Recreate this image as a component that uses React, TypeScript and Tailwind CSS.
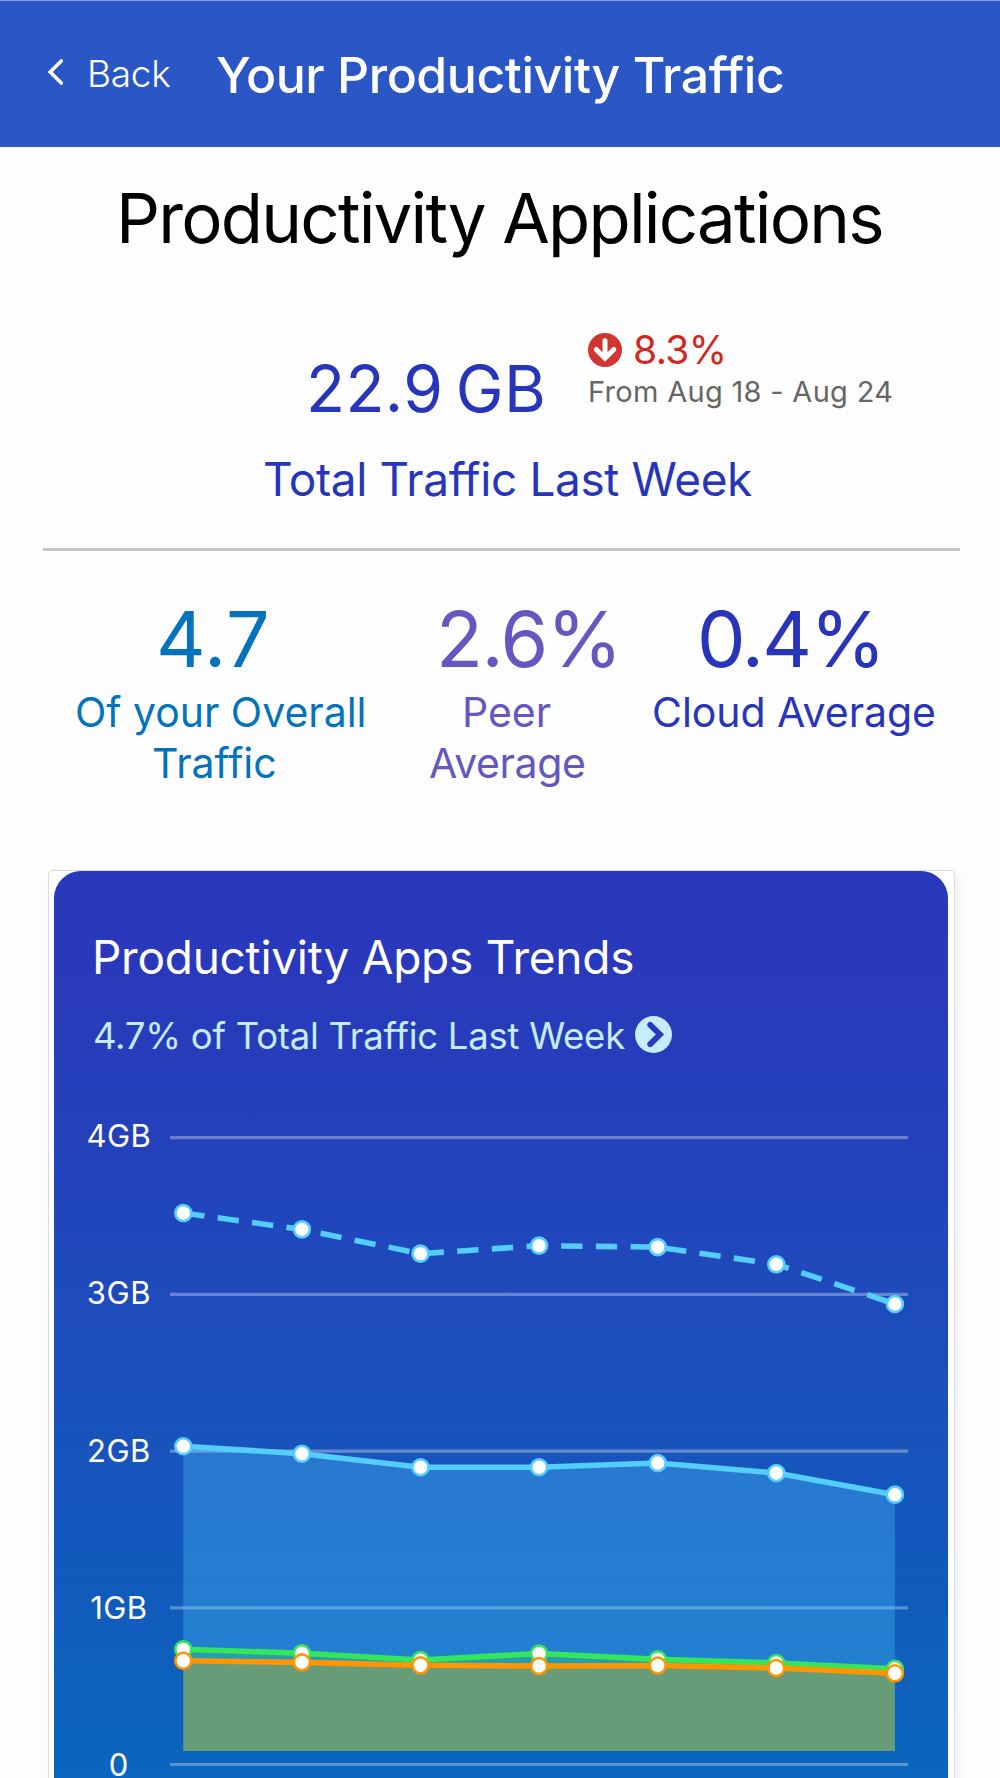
const stats = [
  {
    value: '4.7',
    color: 'text-[#0473be]',
    column: 'w-[345px]',
    valueClass: 'pl-[113px] tracking-[0.9px]',
    lines: [
      { text: 'Of your Overall', className: 'pl-[32px] tracking-[-0.03px]' },
      { text: 'Traffic', className: 'pl-[109px]' },
    ],
  },
  {
    value: '2.6%',
    color: 'text-[#6457bf]',
    column: 'w-[242px]',
    valueClass: 'pl-[48px] tracking-[-1.4px]',
    lines: [
      { text: 'Peer', className: 'pl-[74px]' },
      { text: 'Average', className: 'pl-[41px] tracking-[-0.37px]' },
    ],
  },
  {
    value: '0.4%',
    color: 'text-[#2834b9]',
    column: 'w-[330px]',
    valueClass: 'pl-[67px] tracking-[-1.8px]',
    lines: [{ text: 'Cloud Average', className: 'pl-[22px] tracking-[-0.04px]' }],
  },
]

// weekly traffic in GB, drawn in this order
const series = [
  { color: '#54ceff', dashed: true, values: [3.519, 3.415, 3.26, 3.311, 3.302, 3.192, 2.939] },
  { color: '#54ceff', dashed: false, values: [2.031, 1.983, 1.897, 1.897, 1.924, 1.86, 1.722] },
  { color: '#35e65b', dashed: false, values: [0.735, 0.71, 0.667, 0.708, 0.671, 0.648, 0.611] },
  { color: '#ff9500', dashed: false, values: [0.662, 0.652, 0.633, 0.629, 0.632, 0.616, 0.582] },
]

const axisLabels = ['0', '1GB', '2GB', '3GB', '4GB']

const ZERO_Y = 704.5
const GB_HEIGHT = 156.7
const AREA_BOTTOM = 691

const getX = (index: number) => 129.3 + index * 118.6
const getY = (value: number) => ZERO_Y - value * GB_HEIGHT

const ArrowDownCircle = () => (
  <svg width="34" height="34" viewBox="0 0 34 34" className="mr-[11px] ml-px" fill="none">
    <circle cx="17" cy="17" r="17" fill="#d13530" />
    <path d="M17 7.8v16M8.2 16.5 17 25.2l8.8-8.7" stroke="#fff" strokeWidth="5" strokeLinecap="round" strokeLinejoin="miter" />
  </svg>
)

const ChevronCircle = () => (
  <svg width="37" height="37" viewBox="0 0 37 37" className="mb-1 ml-[10px]" fill="none">
    <circle cx="18.5" cy="18.5" r="18.5" fill="#c5ecff" />
    <path d="m15.2 8.9 9.7 9.6-9.7 9.6" stroke="#2a39bb" strokeWidth="5.8" strokeLinecap="round" strokeLinejoin="miter" />
  </svg>
)

const TrendsChart = () => {
  return (
    <svg width="894" height="719" viewBox="0 0 894 719" className="block shrink-0">
      {axisLabels.map((label, i) => (
        <g key={label}>
          <text
            x="64.9"
            y={716.3 - i * 157.3}
            textAnchor="middle"
            fill="#fff"
            className="text-[31px] tracking-[0.5px]"
          >
            {label}
          </text>
          <line x1="116" x2="854" y1={getY(i)} y2={getY(i)} stroke="#fff" strokeOpacity="0.32" strokeWidth="3.2" />
        </g>
      ))}

      {series.map((item, s) => {
        const points = item.values.map((value, i) => `${getX(i)},${getY(value)}`).join(' ')
        return (
          <g key={s}>
            {!item.dashed && (
              <polygon
                points={`${getX(0)},${AREA_BOTTOM} ${points} ${getX(6)},${AREA_BOTTOM}`}
                fill={item.color}
                fillOpacity="0.3"
              />
            )}
            <polyline
              points={points}
              fill="none"
              stroke={item.color}
              strokeWidth="5.6"
              strokeDasharray={item.dashed ? '21.3 13.4' : undefined}
            />
            {item.values.map((value, i) => (
              <circle key={i} cx={getX(i)} cy={getY(value)} r="8" fill="#fff" stroke={item.color} strokeWidth="2.6" />
            ))}
          </g>
        )
      })}
    </svg>
  )
}

export default function App() {
  return (
    <div className="h-[1778px] w-[1000px] overflow-hidden bg-[#fdfdfd] font-['Inter','Liberation_Sans',sans-serif]">
      <header className="flex h-[147px] items-center border-t border-[#86a2e0] bg-[#2a56c6] text-white">
        <svg width="18" height="30" viewBox="0 0 18 30" className="mb-1 ml-[46px]" fill="none">
          <path d="M15.3 4 4.2 15l11.1 11" stroke="currentColor" strokeWidth="3.6" strokeLinecap="round" />
        </svg>
        <span className="ml-[23px] w-[129px] text-[37px] font-[350] tracking-[-0.3px]">Back</span>
        <h1 className="mt-0.5 text-[50px] leading-none font-medium tracking-[-0.46px]">Your Productivity Traffic</h1>
      </header>

      <h2 className="h-[140px] pl-[116px] text-[69px] leading-[142px] tracking-[-1.8px] text-black">
        Productivity Applications
      </h2>

      {/* Weekly total */}
      <section className="pt-10">
        <div className="flex">
          <div className="mt-[30px] ml-[306px] w-[281px] text-[64px] leading-[64px] tracking-[0.4px] [word-spacing:-6px] text-[#2635b9]">
            22.9 GB
          </div>
          <div>
            <div className="flex h-[46px] items-center text-[39px] tracking-[-0.6px] text-[#d0281f]">
              <ArrowDownCircle />
              8.3%
            </div>
            <div className="pl-px text-[29px] leading-[38px] tracking-[0.3px] text-[#666]">From Aug 18 - Aug 24</div>
          </div>
        </div>
        <div className="mt-[30px] pl-[263px] text-[46px] leading-[56px] tracking-[-0.38px] text-[#2635b9]">
          Total Traffic Last Week
        </div>
      </section>

      <hr className="mt-[41px] ml-[43px] h-[3px] w-[917px] border-0 bg-[#c8c8c8]" />

      <section className="mt-12 ml-[43px] flex h-[190px]">
        {stats.map(stat => (
          <div key={stat.value} className={`${stat.column} ${stat.color}`}>
            <div className={`mb-2 text-[77px] leading-[80px] ${stat.valueClass}`}>{stat.value}</div>
            {stat.lines.map(line => (
              <div key={line.text} className={`text-[41px] leading-[51px] whitespace-nowrap ${line.className}`}>
                {line.text}
              </div>
            ))}
          </div>
        ))}
      </section>

      {/* Trends card */}
      <section className="mt-[81px] ml-12 w-[907px] rounded-[5px] border border-[#dadada] bg-white pr-[6px] pl-[5px] shadow-[3px_4px_8px_rgba(0,0,0,0.06)]">
        <div className="h-[1000px] rounded-t-[27px] bg-[linear-gradient(180deg,#2839bb_0px,#2a38bb_80px,#2342bb_290px,#1b51bc_520px,#1259bc_690px,#0a66be_900px)] pt-14">
          <h3 className="pl-[38px] text-[46px] leading-[60px] tracking-[-0.26px] text-white">Productivity Apps Trends</h3>
          <div className="mt-[25px] flex h-12 items-center pl-[39px] text-[36.5px] tracking-[-0.25px] text-[#c5ecff]">
            4.7% of Total Traffic Last Week
            <ChevronCircle />
          </div>
          <TrendsChart />
        </div>
      </section>
    </div>
  )
}
